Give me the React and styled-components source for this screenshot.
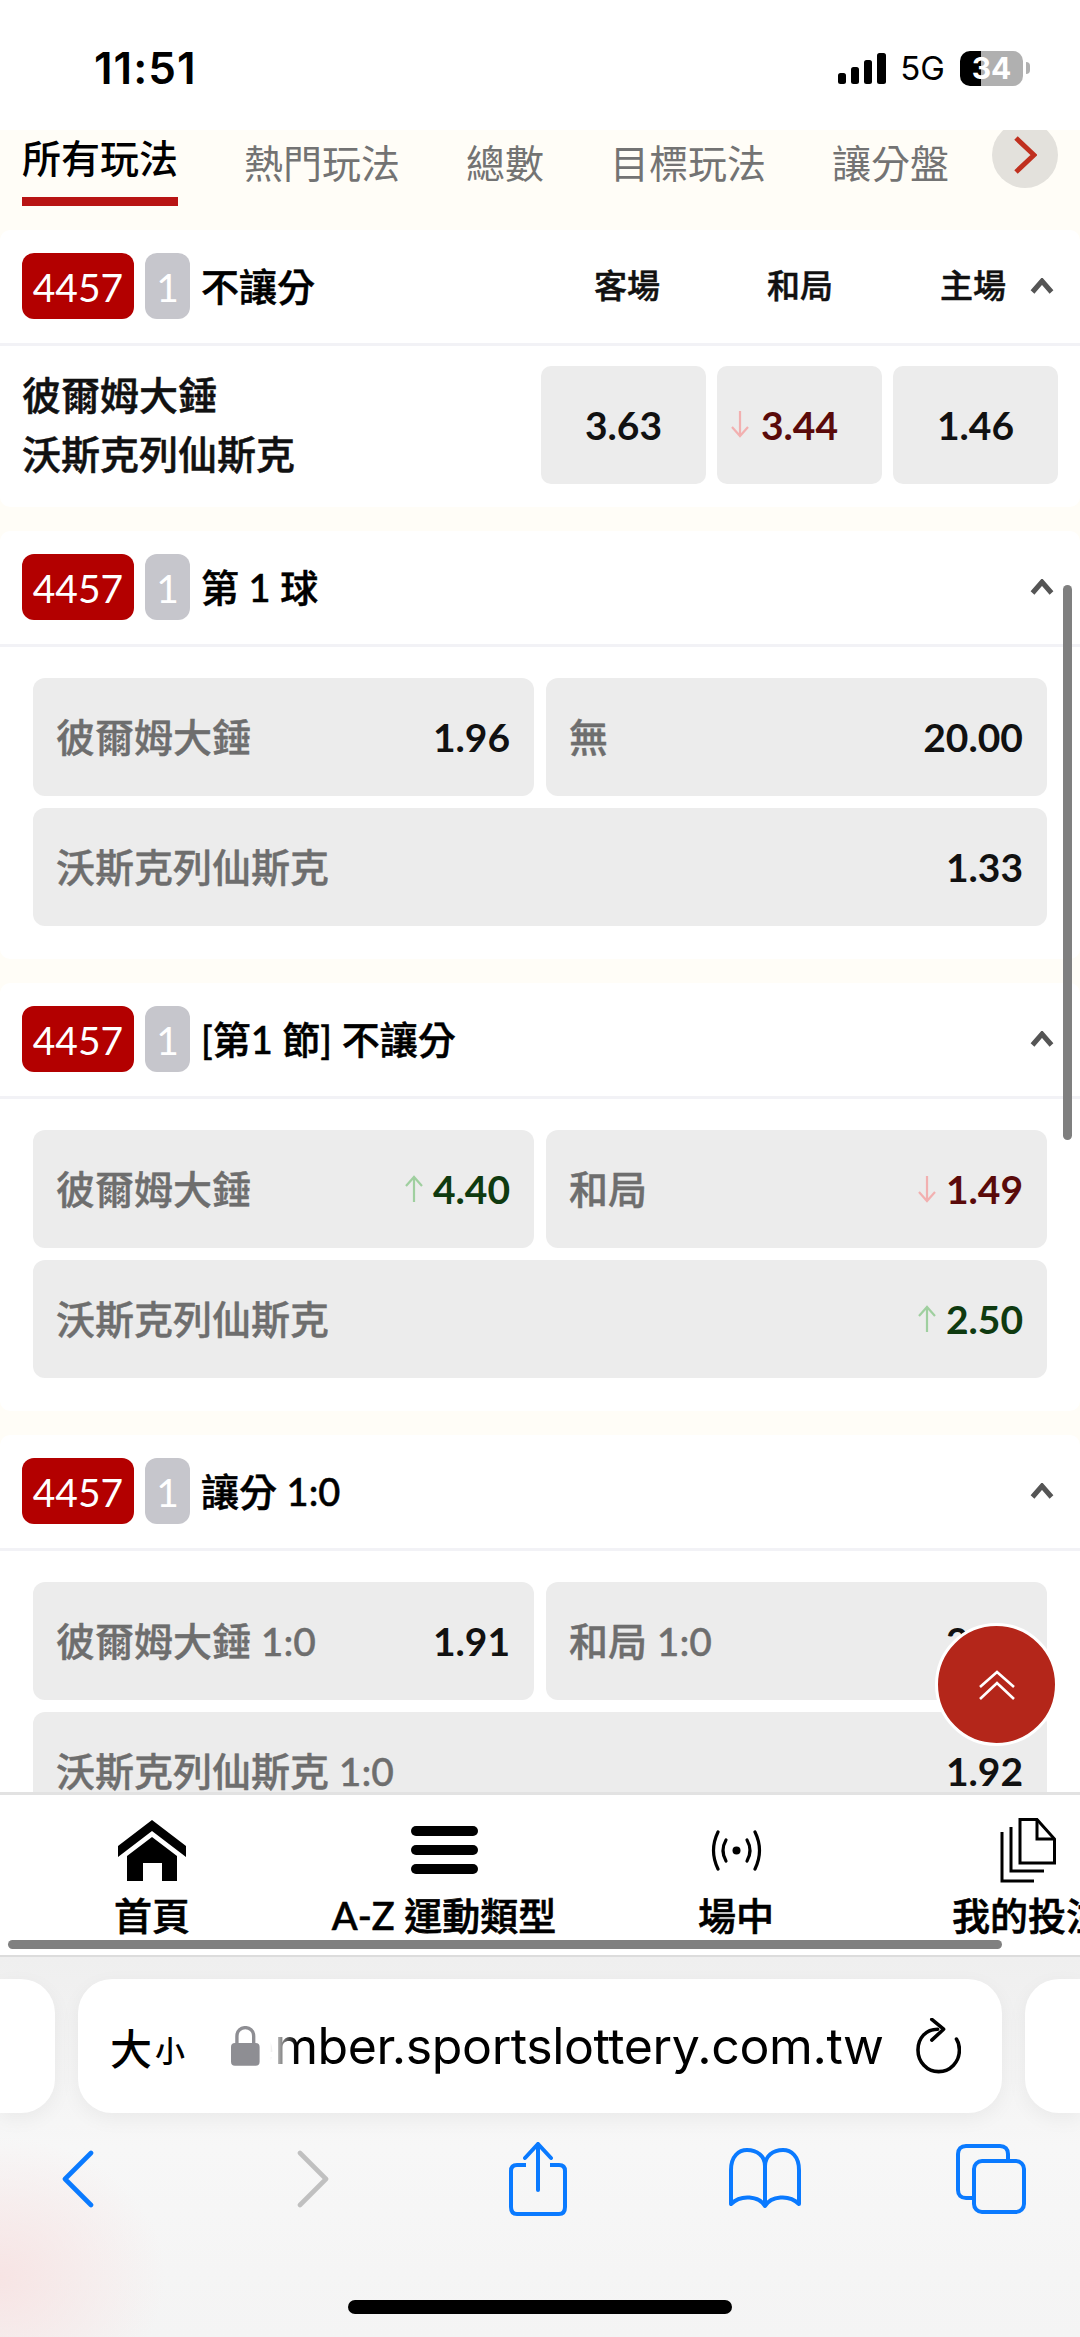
import styled, { createGlobalStyle } from 'styled-components';

const GlobalStyle = createGlobalStyle`
  html, body {
    margin: 0;
    padding: 0;
    background: #fff;
  }
  * {
    box-sizing: border-box;
  }
`;

const FONT = `Lato, "Noto Sans CJK TC", sans-serif`;

const Page = styled.div`
  position: relative;
  width: 1080px;
  height: 2337px;
  overflow: hidden;
  display: flex;
  flex-direction: column;
  font-family: ${FONT};
  background: #fff;
`;

const StatusBar = styled.div`
  height: 130px;
  flex: none;
  display: flex;
  align-items: flex-start;
  justify-content: space-between;
  padding: 47px 50px 0 94px;
  background: #fff;
`;

const Time = styled.div`
  font-family: Inter, sans-serif;
  font-size: 44px;
  font-weight: 600;
  line-height: 42px;
  letter-spacing: 1px;
  color: #000;
`;

const StatusRight = styled.div`
  display: flex;
  align-items: center;
  height: 42px;
`;

const NetworkLabel = styled.span`
  font-family: Inter, sans-serif;
  font-size: 33px;
  font-weight: 400;
  margin: 0 15px 0 14px;
  color: #000;
`;

const Battery = styled.div`
  width: 63px;
  height: 35px;
  border-radius: 10px;
  background: linear-gradient(90deg, #000 0 21px, #b0b0b0 21px);
  color: #fff;
  font-family: Inter, sans-serif;
  font-size: 30px;
  font-weight: 700;
  line-height: 35px;
  text-align: center;
`;

const BatteryCap = styled.div`
  width: 4px;
  height: 12px;
  margin-left: 3px;
  border-radius: 0 4px 4px 0;
  background: #b0b0b0;
`;

const Main = styled.div`
  flex: 1;
  position: relative;
  min-height: 0;
  overflow: hidden;
  background: #fffdf7;
`;

const TabBar = styled.div`
  position: relative;
  height: 100px;
  display: flex;
  gap: 66px;
  padding-left: 22px;
  overflow: hidden;
`;

const Tab = styled.div`
  height: 76px;
  padding-top: ${p => (p.$active ? '2px' : '7px')};
  font-size: 39px;
  line-height: 52px;
  white-space: nowrap;
  font-weight: ${p => (p.$active ? 500 : 400)};
  color: ${p => (p.$active ? '#000' : '#737373')};
  border-bottom: ${p => (p.$active ? '9px solid #b81414' : 'none')};
`;

const TabArrow = styled.div`
  position: absolute;
  right: 22px;
  top: -8px;
  width: 66px;
  height: 66px;
  border-radius: 50%;
  background: #e3e1dc;
  display: flex;
  align-items: center;
  justify-content: center;
`;

const Card = styled.section`
  background: #fff;
  border-radius: 10px;
  margin-bottom: 24px;
`;

const CardHead = styled.div`
  height: 116px;
  display: flex;
  align-items: center;
  padding: 1px 26px 2px 22px;
  border-bottom: 3px solid #f2f2f6;
`;

const Badge = styled.div`
  width: ${p => (p.$small ? '45px' : '112px')};
  height: 66px;
  margin-right: 11px;
  border-radius: 12px;
  background: ${p => (p.$small ? '#c6c6cc' : '#b30000')};
  color: #fff;
  font-size: 39px;
  line-height: 68px;
  text-align: center;
`;

const CardTitle = styled.div`
  flex: 1;
  padding-bottom: 4px;
  font-size: 38px;
  font-weight: 500;
  -webkit-text-stroke: 0.5px #000;
  color: #000;
  white-space: nowrap;
`;

const ColLabels = styled.div`
  display: flex;
  gap: 107px;
  margin-right: 24px;
  padding-bottom: 4px;
`;

const ColLabel = styled.div`
  width: 66px;
  font-size: 33px;
  font-weight: 500;
  -webkit-text-stroke: 0.5px #111;
  color: #111;
  white-space: nowrap;
`;

const MatchRow = styled.div`
  display: flex;
  align-items: center;
  justify-content: space-between;
  padding: 20px 22px 23px;
`;

const Teams = styled.div`
  font-size: 39px;
  font-weight: 500;
  -webkit-text-stroke: 0.5px #111;
  line-height: 59px;
  color: #111;
`;

const OddsGroup = styled.div`
  display: flex;
  gap: 11px;
`;

const OddsBox = styled.div`
  position: relative;
  width: 165px;
  height: 118px;
  border-radius: 10px;
  background: #ececec;
  display: flex;
  align-items: center;
  justify-content: center;
`;

const OddsArrow = styled.span`
  position: absolute;
  left: 13px;
  top: 44px;
  display: flex;
`;

const Value = styled.span`
  font-size: 39px;
  font-weight: 700;
  white-space: nowrap;
  display: inline-flex;
  align-items: center;
  gap: 9px;
  color: ${p => (p.$dir === 'down' ? '#5a0a0a' : p.$dir === 'up' ? '#0f3a10' : '#111')};
`;

const Options = styled.div`
  display: grid;
  grid-template-columns: 1fr 1fr;
  gap: 12px;
  padding: 31px 33px 33px;
`;

const Option = styled.div`
  grid-column: ${p => (p.$wide ? '1 / -1' : 'auto')};
  height: 118px;
  padding: 0 24px 0 23px;
  border-radius: 12px;
  background: #ececec;
  display: flex;
  align-items: center;
  justify-content: space-between;
`;

const OptionLabel = styled.span`
  padding-bottom: 4px;
  font-size: 39px;
  font-weight: 500;
  -webkit-text-stroke: 0.4px #6e6e6e;
  color: #6e6e6e;
  white-space: nowrap;
`;

const ScrollThumb = styled.div`
  position: absolute;
  right: 8px;
  top: 455px;
  width: 9px;
  height: 555px;
  border-radius: 5px;
  background: #7f7f7f;
`;

const TopButton = styled.div`
  position: absolute;
  left: 935px;
  top: 1493px;
  width: 123px;
  height: 123px;
  border-radius: 50%;
  border: 3px solid #fff;
  background: #b4261a;
  display: flex;
  align-items: center;
  justify-content: center;
`;

const BottomNav = styled.nav`
  position: relative;
  height: 165px;
  flex: none;
  display: flex;
  padding: 20px 0 0 6px;
  overflow: hidden;
  background: #fff;
  border-top: 3px solid #e2e2e2;
  border-bottom: 2px solid #dcdcdc;
`;

const NavItem = styled.div`
  flex: none;
  width: 292px;
  display: flex;
  flex-direction: column;
  align-items: center;
`;

const NavIcon = styled.div`
  height: 70px;
  display: flex;
  align-items: center;
  justify-content: center;
`;

const NavLabel = styled.div`
  margin-top: 5px;
  font-size: 38px;
  line-height: 50px;
  font-weight: 500;
  -webkit-text-stroke: 0.6px #000;
  color: #000;
  white-space: nowrap;
`;

const NavScroll = styled.div`
  position: absolute;
  left: 8px;
  top: 145px;
  width: 994px;
  height: 9px;
  border-radius: 5px;
  background: #808080;
`;

const Browser = styled.div`
  position: relative;
  height: 380px;
  flex: none;
  overflow: hidden;
  background:
    radial-gradient(ellipse 165px 140px at 0 320px, #f7e4e4 0%, rgba(247, 228, 228, 0) 100%),
    linear-gradient(180deg, #efefef 0%, #f7f7f7 50%, #f4f4f4 100%);
`;

const UrlRow = styled.div`
  display: grid;
  grid-template-columns: 55px 924px 55px;
  gap: 23px;
  margin: 22px 0 0 0;
`;

const SideTab = styled.div`
  height: 134px;
  background: #fff;
  border-radius: ${p => (p.$left ? '0 34px 34px 0' : '34px 0 0 34px')};
  box-shadow: 0 6px 20px rgba(0, 0, 0, 0.05);
`;

const UrlBar = styled.div`
  height: 134px;
  padding: 0 41px 0 32px;
  background: #fff;
  border-radius: 34px;
  box-shadow: 0 6px 20px rgba(0, 0, 0, 0.05);
  display: flex;
  align-items: center;
`;

const SizeBig = styled.span`
  font-family: "Noto Sans CJK TC", sans-serif;
  font-size: 42px;
  font-weight: 500;
  color: #000;
`;

const SizeSmall = styled.span`
  font-family: "Noto Sans CJK TC", sans-serif;
  font-size: 30px;
  font-weight: 500;
  color: #000;
  margin: 6px 46px 0 3px;
`;

const UrlClip = styled.div`
  flex: none;
  width: 614px;
  margin: 0 32px 0 10px;
  display: flex;
  justify-content: flex-end;
  overflow: hidden;
  mask-image: linear-gradient(90deg, transparent 0, #000 26px);
`;

const UrlText = styled.span`
  font-family: Inter, sans-serif;
  font-size: 50px;
  line-height: 64px;
  letter-spacing: -0.4px;
  color: #000;
  white-space: nowrap;
`;

const Toolbar = styled.div`
  display: grid;
  grid-template-columns: 235px 225px 227px 226px 100px;
  align-items: center;
  height: 80px;
  margin-top: 26px;
  padding-left: 28px;
`;

const ToolCell = styled.div`
  width: 100px;
  display: flex;
  align-items: center;
  justify-content: center;
`;

const HomeBar = styled.div`
  position: absolute;
  left: 348px;
  bottom: 23px;
  width: 384px;
  height: 14px;
  border-radius: 7px;
  background: #000;
`;

const Caret = () => (
  <svg width="24" height="16" viewBox="0 0 24 16" fill="none">
    <path d="M2.5 14 L12 3 L21.5 14" stroke="#555" strokeWidth="5" />
  </svg>
);

const CaretWrap = styled.div`
  display: flex;
  margin-left: auto;
  width: 24px;
  margin-right: 0;
`;

const Arrow = ({ dir }) => (
  <svg width="20" height="28" viewBox="0 0 20 28" fill="none" stroke={dir === 'up' ? '#9fcf9f' : '#f2b0b0'} strokeWidth="2.2">
    {dir === 'up' ? <path d="M10 27 V2 M2 11 L10 2 L18 11" /> : <path d="M10 1 V26 M2 17 L10 26 L18 17" />}
  </svg>
);

const Odd = ({ value, dir }) => (
  <Value $dir={dir}>
    {dir && <Arrow dir={dir} />}
    {value}
  </Value>
);

const Head = ({ title, columns }) => (
  <CardHead>
    <Badge>4457</Badge>
    <Badge $small>1</Badge>
    <CardTitle>{title}</CardTitle>
    {columns && (
      <ColLabels>
        {columns.map(c => <ColLabel key={c}>{c}</ColLabel>)}
      </ColLabels>
    )}
    <CaretWrap><Caret /></CaretWrap>
  </CardHead>
);

const markets = [
  {
    title: '第 1 球',
    options: [
      { label: '彼爾姆大錘', value: '1.96' },
      { label: '無', value: '20.00' },
      { label: '沃斯克列仙斯克', value: '1.33', wide: true },
    ],
  },
  {
    title: '[第1 節] 不讓分',
    options: [
      { label: '彼爾姆大錘', value: '4.40', dir: 'up' },
      { label: '和局', value: '1.49', dir: 'down' },
      { label: '沃斯克列仙斯克', value: '2.50', dir: 'up', wide: true },
    ],
  },
  {
    title: '讓分 1:0',
    options: [
      { label: '彼爾姆大錘 1:0', value: '1.91' },
      { label: '和局 1:0', value: '2.90' },
      { label: '沃斯克列仙斯克 1:0', value: '1.92', wide: true },
    ],
  },
];

const tabs = ['所有玩法', '熱門玩法', '總數', '目標玩法', '讓分盤'];

const HomeIcon = () => (
  <svg width="68" height="61" viewBox="0 0 68 61" fill="#000">
    <path d="M34 0 L68 26 V37 L34 11 L0 37 V26 Z" />
    <path d="M34 17 L59 36 V61 H44 V43 H25 V61 H9 V36 Z" />
  </svg>
);

const MenuIcon = () => (
  <svg width="67" height="48" viewBox="0 0 67 48" fill="#000">
    <rect x="0" y="0" width="67" height="10" rx="5" />
    <rect x="0" y="19" width="67" height="10" rx="5" />
    <rect x="0" y="38" width="67" height="10" rx="5" />
  </svg>
);

const LiveIcon = () => (
  <svg width="51" height="41" viewBox="0 0 51 41" fill="none" stroke="#000" strokeWidth="3.2" strokeLinecap="round">
    <circle cx="25.5" cy="20.5" r="4" fill="#000" stroke="none" />
    <path d="M15 10 Q9 20.5 15 31" />
    <path d="M36 10 Q42 20.5 36 31" />
    <path d="M7 2 Q-2 20.5 7 39" />
    <path d="M44 2 Q53 20.5 44 39" />
  </svg>
);

const DocsIcon = () => (
  <svg width="56" height="65" viewBox="0 0 56 65" fill="none" stroke="#000" strokeWidth="3">
    <path d="M20 1.5 H37 L54.5 21 V45 H20 Z" />
    <path d="M37 1.5 V21 H54.5" />
    <path d="M11 9 V53 H44" />
    <path d="M2 14 V63 H34" />
  </svg>
);

const DoubleUp = () => (
  <svg width="36" height="30" viewBox="0 0 36 30" fill="none" stroke="#fff" strokeWidth="2.6">
    <path d="M1 17 L18 2 L35 17" />
    <path d="M1 29 L18 13 L35 29" />
  </svg>
);

const LockIcon = () => (
  <svg width="29" height="40" viewBox="0 0 29 40" fill="none">
    <path d="M6 19 V10 C6 -1.5 23 -1.5 23 10 V19" stroke="#8e8e93" strokeWidth="3.4" />
    <rect x="0" y="17" width="29" height="23" rx="4" fill="#8e8e93" />
  </svg>
);

const ReloadIcon = () => (
  <svg width="46" height="56" viewBox="0 0 46 56" fill="none" stroke="#000" strokeWidth="3.6" strokeLinecap="round" strokeLinejoin="round">
    <path d="M22 11 C10 11 2 20 2 32 C2 44 11 54 23 54 C35 54 44 44 44 32 C44 27 43 24 41 21" />
    <path d="M16 1 L28 11 L16 22" />
  </svg>
);

const BLUE = '#0a7aff';

const BackIcon = () => (
  <svg width="32" height="58" viewBox="0 0 32 58" fill="none" stroke={BLUE} strokeWidth="4.6" strokeLinecap="round" strokeLinejoin="round">
    <path d="M29 3 L3 29 L29 55" />
  </svg>
);

const ForwardIcon = () => (
  <svg width="32" height="58" viewBox="0 0 32 58" fill="none" stroke="#c0c0c0" strokeWidth="4.6" strokeLinecap="round" strokeLinejoin="round">
    <path d="M3 3 L29 29 L3 55" />
  </svg>
);

const ShareIcon = () => (
  <svg width="58" height="74" viewBox="0 0 58 74" fill="none" stroke={BLUE} strokeWidth="4">
    <path d="M17 23 H8 C4 23 2 25 2 29 V65 C2 70 4 72 8 72 H50 C54 72 56 70 56 65 V29 C56 25 54 23 50 23 H41" />
    <path d="M29 48 V2 M16 16 L29 2 L42 16" strokeLinecap="round" />
  </svg>
);

const BookIcon = () => (
  <svg width="72" height="62" viewBox="0 0 72 62" fill="none" stroke={BLUE} strokeWidth="4" strokeLinejoin="round">
    <path d="M36 58 C30 48 12 46 2 56 V22 C2 8 10 2 18 2 C28 2 36 8 36 18 C36 8 44 2 54 2 C62 2 70 8 70 22 V56 C60 46 42 48 36 58 Z" />
    <path d="M36 18 V58" />
  </svg>
);

const TabsIcon = () => (
  <svg width="70" height="70" viewBox="0 0 70 70" fill="none" stroke={BLUE} strokeWidth="4">
    <path d="M52 16 V10 C52 5 49 2 44 2 H10 C5 2 2 5 2 10 V46 C2 51 5 54 10 54 H17" />
    <rect x="18" y="17" width="50" height="51" rx="8" />
  </svg>
);

const Chevron = () => (
  <svg width="24" height="38" viewBox="0 0 24 38" fill="none" stroke="#c0301f" strokeWidth="5">
    <path d="M3 2 L21 19 L3 36" />
  </svg>
);

const SignalIcon = () => (
  <svg width="48" height="31" viewBox="0 0 48 31" fill="#000">
    <rect x="0" y="20" width="8" height="11" rx="2.5" />
    <rect x="13" y="14" width="8" height="17" rx="2.5" />
    <rect x="26" y="7" width="8" height="24" rx="2.5" />
    <rect x="39" y="0" width="9" height="31" rx="2.5" />
  </svg>
);

const App = () => (
  <Page>
    <GlobalStyle />
    <StatusBar>
      <Time>11:51</Time>
      <StatusRight>
        <SignalIcon />
        <NetworkLabel>5G</NetworkLabel>
        <Battery>34</Battery>
        <BatteryCap />
      </StatusRight>
    </StatusBar>

    <Main>
      <TabBar>
        {tabs.map((t, i) => <Tab key={t} $active={i === 0}>{t}</Tab>)}
        <TabArrow><Chevron /></TabArrow>
      </TabBar>

      <Card>
        <Head title="不讓分" columns={['客場', '和局', '主場']} />
        <MatchRow>
          <Teams>彼爾姆大錘<br />沃斯克列仙斯克</Teams>
          <OddsGroup>
            <OddsBox><Odd value="3.63" /></OddsBox>
            <OddsBox>
              <OddsArrow><Arrow dir="down" /></OddsArrow>
              <Value $dir="down">3.44</Value>
            </OddsBox>
            <OddsBox><Odd value="1.46" /></OddsBox>
          </OddsGroup>
        </MatchRow>
      </Card>

      {markets.map(m => (
        <Card key={m.title}>
          <Head title={m.title} />
          <Options>
            {m.options.map(o => (
              <Option key={o.label} $wide={o.wide}>
                <OptionLabel>{o.label}</OptionLabel>
                <Odd value={o.value} dir={o.dir} />
              </Option>
            ))}
          </Options>
        </Card>
      ))}

      <ScrollThumb />
      <TopButton><DoubleUp /></TopButton>
    </Main>

    <BottomNav>
      <NavItem><NavIcon><HomeIcon /></NavIcon><NavLabel>首頁</NavLabel></NavItem>
      <NavItem><NavIcon><MenuIcon /></NavIcon><NavLabel>A-Z 運動類型</NavLabel></NavItem>
      <NavItem><NavIcon><LiveIcon /></NavIcon><NavLabel>場中</NavLabel></NavItem>
      <NavItem><NavIcon><DocsIcon /></NavIcon><NavLabel>我的投注</NavLabel></NavItem>
      <NavScroll />
    </BottomNav>

    <Browser>
      <UrlRow>
        <SideTab $left />
        <UrlBar>
          <SizeBig>大</SizeBig>
          <SizeSmall>小</SizeSmall>
          <LockIcon />
          <UrlClip><UrlText>member.sportslottery.com.tw</UrlText></UrlClip>
          <ReloadIcon />
        </UrlBar>
        <SideTab />
      </UrlRow>
      <Toolbar>
        <ToolCell><BackIcon /></ToolCell>
        <ToolCell><ForwardIcon /></ToolCell>
        <ToolCell><ShareIcon /></ToolCell>
        <ToolCell><BookIcon /></ToolCell>
        <ToolCell><TabsIcon /></ToolCell>
      </Toolbar>
      <HomeBar />
    </Browser>
  </Page>
);

export default App;
